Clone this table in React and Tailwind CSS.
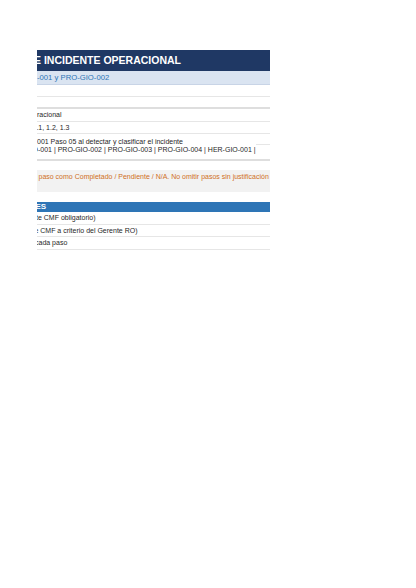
import React from "react";

const font = { fontFamily: '"Liberation Sans", Arial, sans-serif' };

const Row = ({ h, thick, children }) => (
  <div
    className={`flex items-center whitespace-nowrap text-[7px] leading-[8px] text-[#1f1f1f] ${h} ${
      thick ? "border-b-2 border-[#dedede]" : "border-b border-[#e6e6e6]"
    }`}
  >
    {children}
  </div>
);

export default function App() {
  return (
    <div className="min-h-[588px] w-[416px] bg-white pt-[50px] pl-[37px]" style={font}>
      <div className="w-[233px] overflow-hidden">
        <div className="flex h-[21px] items-center whitespace-nowrap bg-[#1f3864] text-[10.5px] font-bold text-white">
          <span className="ml-[-3px]">E INCIDENTE OPERACIONAL</span>
        </div>
        <div className="flex h-[14px] items-center whitespace-nowrap border-b border-[#c8d4e6] bg-[#dae4f1] text-[7.7px] text-[#2e75b6]">
          <span>-001 y PRO-GIO-002</span>
        </div>
        <Row h="h-[12px]" />
        <Row h="h-[12px]" thick />
        <Row h="h-[13px]">
          <span>racional</span>
        </Row>
        <Row h="h-[12px]">
          <span className="ml-[-4.5px]">1.1, 1.2, 1.3</span>
        </Row>
        <div className="flex h-[27px] flex-col whitespace-nowrap border-b-2 border-[#dedede] pt-[4px] text-[7px] leading-[8px] text-[#1f1f1f]">
          <span>001 Paso 05 al detectar y clasificar el incidente</span>
          <div className="flex">
            <span className="ml-[-4.5px]">O-001 | PRO-GIO-002 | PRO-GIO-003 | PRO-GIO-004 | HER-GIO-001 |</span>
            <div className="mt-[-2px] flex-1 self-start border-t border-[#e6e6e6]" />
          </div>
        </div>
        <div className="h-[9px]" />
        <div className="h-[22px] whitespace-nowrap bg-[#f2f2f2] pt-[3px] text-[7px] leading-[8px] text-[#d06f24]">
          <span className="ml-[1.5px]">paso como Completado / Pendiente / N/A. No omitir pasos sin justificación</span>
        </div>
        <div className="h-[10px]" />
        <div className="flex h-[10px] items-center whitespace-nowrap bg-[#2e75b6] text-[8px] font-bold text-white">
          <span className="ml-[-1.5px]">ES</span>
        </div>
        <Row h="h-[13px]">
          <span className="ml-[-1px]">te CMF obligatorio)</span>
        </Row>
        <Row h="h-[12px]">
          <span className="ml-[-2.6px]">e CMF a criterio del Gerente RO)</span>
        </Row>
        <Row h="h-[13px]">
          <span className="ml-[-2px]">cada paso</span>
        </Row>
      </div>
    </div>
  );
}
